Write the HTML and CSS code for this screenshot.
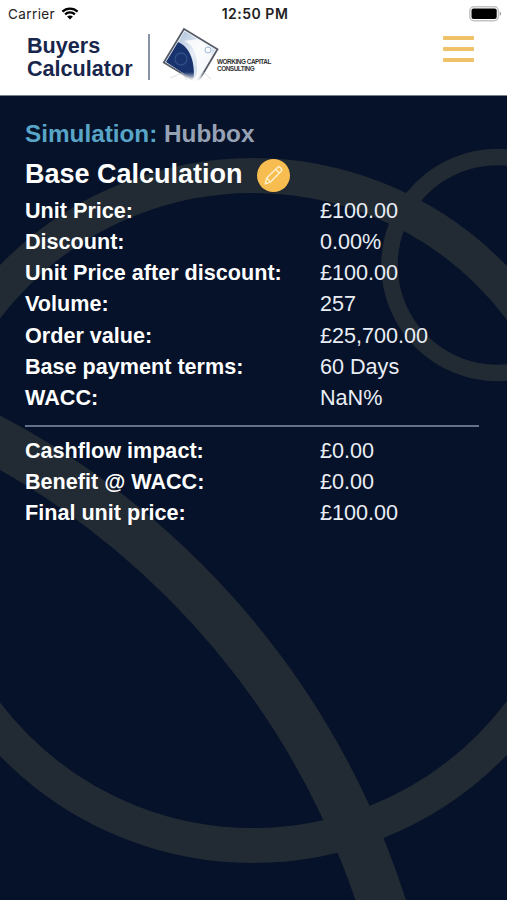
FILE: index.html
```html
<!DOCTYPE html>
<html lang="en">
<head>
<meta charset="utf-8">
<title>Buyers Calculator</title>
<link rel="stylesheet" href="styles.css">
</head>
<body>
<div class="app">
  <svg class="rings" viewBox="0 0 507 900" aria-hidden="true">
    <circle cx="253" cy="510.5" r="335" stroke-width="35"/>
    <circle cx="497.5" cy="265" r="108" stroke-width="16.5"/>
    <circle cx="-386.5" cy="1151.8" r="807.5" stroke-width="48"/>
  </svg>
  <header class="header">
    <div class="status">
      <div class="carrier">
        <span>Carrier</span>
        <svg class="wifi" viewBox="0 0 18 13" aria-hidden="true">
          <path d="M1.4 4.6C5.6.5 12.4.5 16.6 4.6M4.1 7.4c2.7-2.6 7.1-2.6 9.8 0"/>
          <path class="wifi-dot" d="M9 12.4 6.1 9.5c1.6-1.4 4.2-1.4 5.8 0z"/>
        </svg>
      </div>
      <span class="clock">12:50 PM</span>
      <svg class="battery" viewBox="0 0 33 16" aria-hidden="true">
        <rect x=".8" y=".8" width="28.6" height="14" rx="4.2" fill="#fff" stroke="#c4c4c4" stroke-width="1.5"/>
        <rect x="2.5" y="2.6" width="25.2" height="10.4" rx="2" fill="#000"/>
        <path d="M30.8 5.6c1.6.5 1.6 3.9 0 4.4z" fill="#999"/>
      </svg>
    </div>
    <div class="brand-row">
      <h1 class="title">Buyers<br>Calculator</h1>
      <div class="brand">
        <svg class="logo" viewBox="0 0 58 56" aria-hidden="true">
          <defs>
            <linearGradient id="glass" x1="0" y1="0" x2="1" y2="1">
              <stop offset="0" stop-color="#8fa9c9"/>
              <stop offset=".5" stop-color="#e6eef6"/>
              <stop offset="1" stop-color="#b5c8dd"/>
            </linearGradient>
            <linearGradient id="fade" x1="0" y1="0" x2="0" y2="1">
              <stop offset="0" stop-color="#fff" stop-opacity="0"/>
              <stop offset=".8" stop-color="#fff"/>
            </linearGradient>
            <clipPath id="tile"><path d="M22.600 4.200 53.500 22.800 34.500 55 4 35z"/></clipPath>
          </defs>
          <path d="M22 2 55.500 22.300 35.500 56 1.800 35.500z" fill="#fff" stroke="#555b67" stroke-width="1.800"/>
          <g clip-path="url(#tile)">
            <path d="M0 0h58v56H0z" fill="url(#glass)"/>
            <path d="M22 14C34 18 38 36 33 56L48 46 50 22 36 12z" fill="#fff" opacity=".8"/>
            <path d="M0 14C20 10 33 24 31.800 50L24 60 0 56z" fill="#17326c"/>
            <circle cx="19" cy="32" r="6" fill="none" stroke="#2f4f86" stroke-width="1.300"/>
            <circle cx="46" cy="23" r="3" fill="none" stroke="#9dbbd6"/>
          </g>
          <path d="M0 45h58v11H0z" fill="url(#fade)"/>
          <path d="M8 51 20 46 25 53M35 53l6-8 8 7" fill="none" stroke="#b9c2cf" opacity=".5"/>
        </svg>
        <span class="company">WORKING CAPITAL<br>CONSULTING</span>
      </div>
      <button class="menu" aria-label="Menu"><i></i><i></i><i></i></button>
    </div>
  </header>
  <main class="content">
    <h2 class="simulation"><span class="accent">Simulation:</span> Hubbox</h2>
    <div class="section-head">
      <h3 class="section-title">Base Calculation</h3>
      <button class="edit" aria-label="Edit">
        <svg viewBox="0 0 33 33" aria-hidden="true">
          <path d="M8.200 24.800 9.700 18.900 20.700 8.300c1.600-1.500 5.200 1.900 3.600 3.600L13.500 23.100z M9.700 18.900l3.800 4.200M18.700 10.300l3.700 3.700"/>
        </svg>
      </button>
    </div>
    <dl class="rows">
      <dt>Unit Price:</dt><dd>£100.00</dd>
      <dt>Discount:</dt><dd>0.00%</dd>
      <dt>Unit Price after discount:</dt><dd>£100.00</dd>
      <dt>Volume:</dt><dd>257</dd>
      <dt>Order value:</dt><dd>£25,700.00</dd>
      <dt>Base payment terms:</dt><dd>60 Days</dd>
      <dt>WACC:</dt><dd>NaN%</dd>
    </dl>
    <dl class="rows totals">
      <dt>Cashflow impact:</dt><dd>£0.00</dd>
      <dt>Benefit @ WACC:</dt><dd>£0.00</dd>
      <dt>Final unit price:</dt><dd>£100.00</dd>
    </dl>
  </main>
</div>
</body>
</html>
```
FILE: styles.css
```css
* { box-sizing: border-box; margin: 0; padding: 0; }
body { background: #051229; font-family: "Liberation Sans", Arial, sans-serif; }
button { border: 0; background: none; }
.app { position: relative; width: 507px; height: 900px; overflow: hidden; }
.rings { position: absolute; inset: 0; width: 507px; height: 900px; fill: none; stroke: #222a34; }
.header { position: relative; height: 96px; background: #fff; border-bottom: 1px solid #77818c; }
.status {
  display: grid; grid-template-columns: 1fr auto 1fr; align-items: center;
  height: 27px; padding: 0 5px 0 8px;
  font-family: Inter, Roboto, sans-serif; font-size: 13.5px; color: #222;
}
.carrier { display: flex; align-items: center; gap: 6px; letter-spacing: .4px; }
.wifi { width: 18px; height: 13px; fill: none; stroke: #000; stroke-width: 2.2; }
.wifi .wifi-dot { fill: #000; stroke: none; }
.clock { font-size: 14px; font-weight: 600; letter-spacing: .5px; }
.battery { width: 33px; height: 16px; justify-self: end; }
.brand-row { display: flex; align-items: flex-start; padding: 0 33px 0 27px; }
.title {
  width: 123px; height: 46px; margin-top: 7px; border-right: 2px solid #8993aa;
  font-size: 21.6px; line-height: 23px; color: #18264c;
}
.brand { display: flex; margin-left: 12px; }
.logo { width: 58px; height: 56px; }
.company { margin: 31px 0 0 -3px; font-size: 6.4px; line-height: 7px; font-weight: 700; letter-spacing: -.45px; color: #333; white-space: nowrap; }
.menu { display: flex; flex-direction: column; gap: 7px; margin: 9px 0 0 auto; }
.menu i { width: 31px; height: 4px; border-radius: 1px; background: #efc169; }
.content { position: relative; padding: 24px 28px 0 25px; color: #fff; }
.simulation { font-size: 24.3px; line-height: 28px; color: #98a2b5; }
.accent { color: #58a5c7; }
.section-head { display: flex; align-items: center; gap: 14px; height: 47px; }
.section-title { margin-top: 4px; font-size: 27px; line-height: 32px; }
.edit { width: 33px; height: 33px; margin-top: 8px; border-radius: 50%; background: #f8bd50; }
.edit svg { display: block; width: 33px; height: 33px; fill: none; stroke: #fff0ce; stroke-width: 1.4; stroke-linejoin: round; }
.rows { display: grid; grid-template-columns: 295px 1fr; grid-auto-rows: 31.15px; font-size: 21.6px; line-height: 31px; }
dt { font-weight: 700; }
dd { color: #e9edf4; }
.totals { margin-top: 12px; padding-top: 8px; border-top: 2px solid #65718a; }
```
